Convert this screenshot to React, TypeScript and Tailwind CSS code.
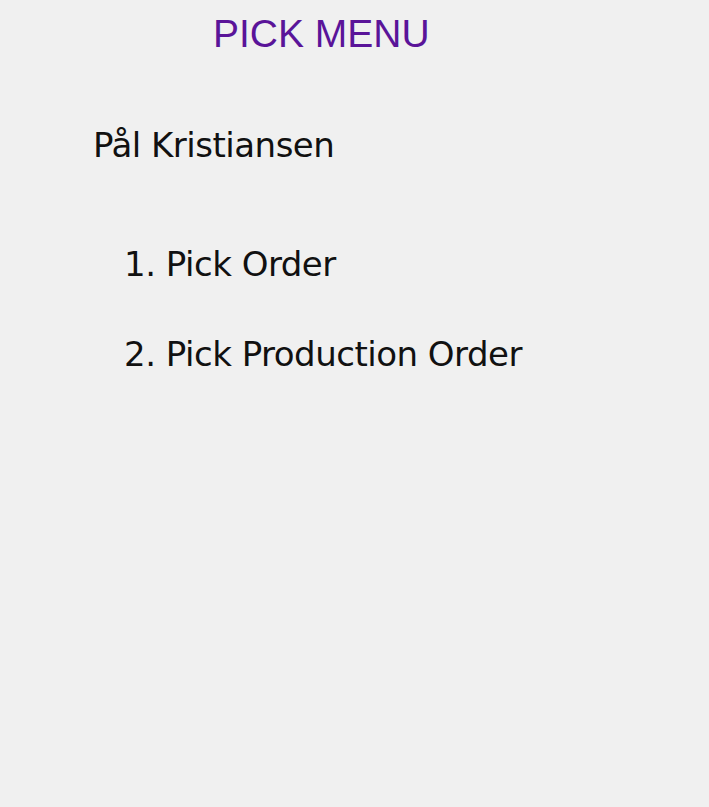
export default function App() {
  return (
    <main className="min-h-[807px] w-full bg-[#f0f0f0] text-black">
      <div className="flex flex-col pt-[14px]">
        <h1 className="pl-[213px] font-['Liberation_Sans',Arial,sans-serif] text-[39px] leading-none font-normal text-[#5a1499]">
          PICK MENU
        </h1>
        <p className="mt-[75px] pl-[93px] font-['DejaVu_Sans',Verdana,sans-serif] text-[34px] leading-none tracking-[-0.5px] text-[#111]">
          Pål Kristiansen
        </p>
        <ul className="font-['DejaVu_Sans',Verdana,sans-serif] text-[34px] leading-none tracking-[-0.5px] text-[#111]">
          <li className="mt-[85px] pl-[124px]">1. Pick Order</li>
          <li className="mt-[56px] pl-[124px]">2. Pick Production Order</li>
        </ul>
      </div>
    </main>
  );
}
